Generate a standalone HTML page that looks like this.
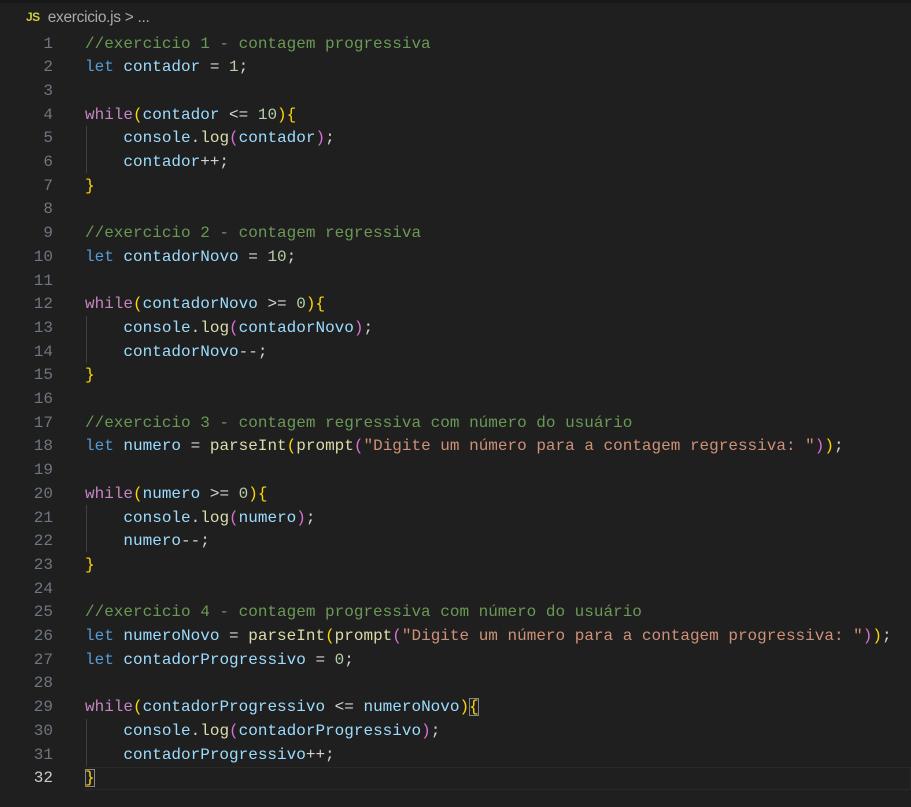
<!DOCTYPE html>
<html><head><meta charset="utf-8"><style>
body{margin:0;width:911px;height:807px;background:#1f1f1f;overflow:hidden;position:relative;font-family:"Liberation Mono",monospace;}
.top{position:absolute;left:0;top:0;width:911px;height:3px;background:#181818;}
.bc{position:absolute;left:26px;top:9px;font-family:"Liberation Sans",sans-serif;font-size:15.5px;color:#a9a9a9;letter-spacing:-0.3px}
.bc b{color:#cbcb41;font-size:12px;margin-right:8px;font-weight:bold;letter-spacing:-0.5px;vertical-align:1px}
.ln{position:absolute;left:0;width:53px;text-align:right;color:#6e7681;font-size:16px;}
.cd{position:absolute;left:85px;font-size:16px;color:#d4d4d4;white-space:pre;}
.c{color:#6a9955}.k{color:#569cd6}.v{color:#9cdcfe}.w{color:#c586c0}.g{color:#ffd700}.p{color:#da70d6}.f{color:#dcdcaa}.n{color:#b5cea8}.s{color:#ce9178}
.guide{position:absolute;left:86px;width:1px;background:#404040}
.cur{position:absolute;left:85px;top:767px;width:826px;height:23px;border:1px solid #282828;border-left:none;box-sizing:border-box}
</style></head><body>
<div class="top"></div>
<div class="bc"><b>JS</b>exercicio.js &gt; ...</div>
<div class="cur"></div>
<div class="guide" style="top:126px;height:47px"></div>
<div class="guide" style="top:316px;height:47px"></div>
<div class="guide" style="top:505px;height:47px"></div>
<div class="guide" style="top:719px;height:47px"></div>
<div id="c"></div>
<script>
var L=[
'<span class="c">//exercicio 1 - contagem progressiva</span>',
'<span class="k">let</span> <span class="v">contador</span> = <span class="n">1</span>;',
'',
'<span class="w">while</span><span class="g">(</span><span class="v">contador</span> &lt;= <span class="n">10</span><span class="g">){</span>',
'    <span class="v">console</span>.<span class="f">log</span><span class="p">(</span><span class="v">contador</span><span class="p">)</span>;',
'    <span class="v">contador</span>++;',
'<span class="g">}</span>',
'',
'<span class="c">//exercicio 2 - contagem regressiva</span>',
'<span class="k">let</span> <span class="v">contadorNovo</span> = <span class="n">10</span>;',
'',
'<span class="w">while</span><span class="g">(</span><span class="v">contadorNovo</span> &gt;= <span class="n">0</span><span class="g">){</span>',
'    <span class="v">console</span>.<span class="f">log</span><span class="p">(</span><span class="v">contadorNovo</span><span class="p">)</span>;',
'    <span class="v">contadorNovo</span>--;',
'<span class="g">}</span>',
'',
'<span class="c">//exercicio 3 - contagem regressiva com número do usuário</span>',
'<span class="k">let</span> <span class="v">numero</span> = <span class="f">parseInt</span><span class="g">(</span><span class="f">prompt</span><span class="p">(</span><span class="s">"Digite um número para a contagem regressiva: "</span><span class="p">)</span><span class="g">)</span>;',
'',
'<span class="w">while</span><span class="g">(</span><span class="v">numero</span> &gt;= <span class="n">0</span><span class="g">){</span>',
'    <span class="v">console</span>.<span class="f">log</span><span class="p">(</span><span class="v">numero</span><span class="p">)</span>;',
'    <span class="v">numero</span>--;',
'<span class="g">}</span>',
'',
'<span class="c">//exercicio 4 - contagem progressiva com número do usuário</span>',
'<span class="k">let</span> <span class="v">numeroNovo</span> = <span class="f">parseInt</span><span class="g">(</span><span class="f">prompt</span><span class="p">(</span><span class="s">"Digite um número para a contagem progressiva: "</span><span class="p">)</span><span class="g">)</span>;',
'<span class="k">let</span> <span class="v">contadorProgressivo</span> = <span class="n">0</span>;',
'',
'<span class="w">while</span><span class="g">(</span><span class="v">contadorProgressivo</span> &lt;= <span class="v">numeroNovo</span><span class="g">)</span><span class="g" style="outline:1px solid #888;outline-offset:-1px">{</span>',
'    <span class="v">console</span>.<span class="f">log</span><span class="p">(</span><span class="v">contadorProgressivo</span><span class="p">)</span>;',
'    <span class="v">contadorProgressivo</span>++;',
'<span class="g" style="outline:1px solid #888;outline-offset:-1px">}</span>'
];
var h='';
for(var i=0;i<L.length;i++){var t=(34.5+i*23.7).toFixed(1);
h+='<div class="ln" style="top:'+t+'px;'+(i==31?'color:#ccc':'')+'">'+(i+1)+'</div><div class="cd" style="top:'+t+'px">'+L[i]+'</div>';}
document.getElementById('c').innerHTML=h;
</script>
</body></html>
